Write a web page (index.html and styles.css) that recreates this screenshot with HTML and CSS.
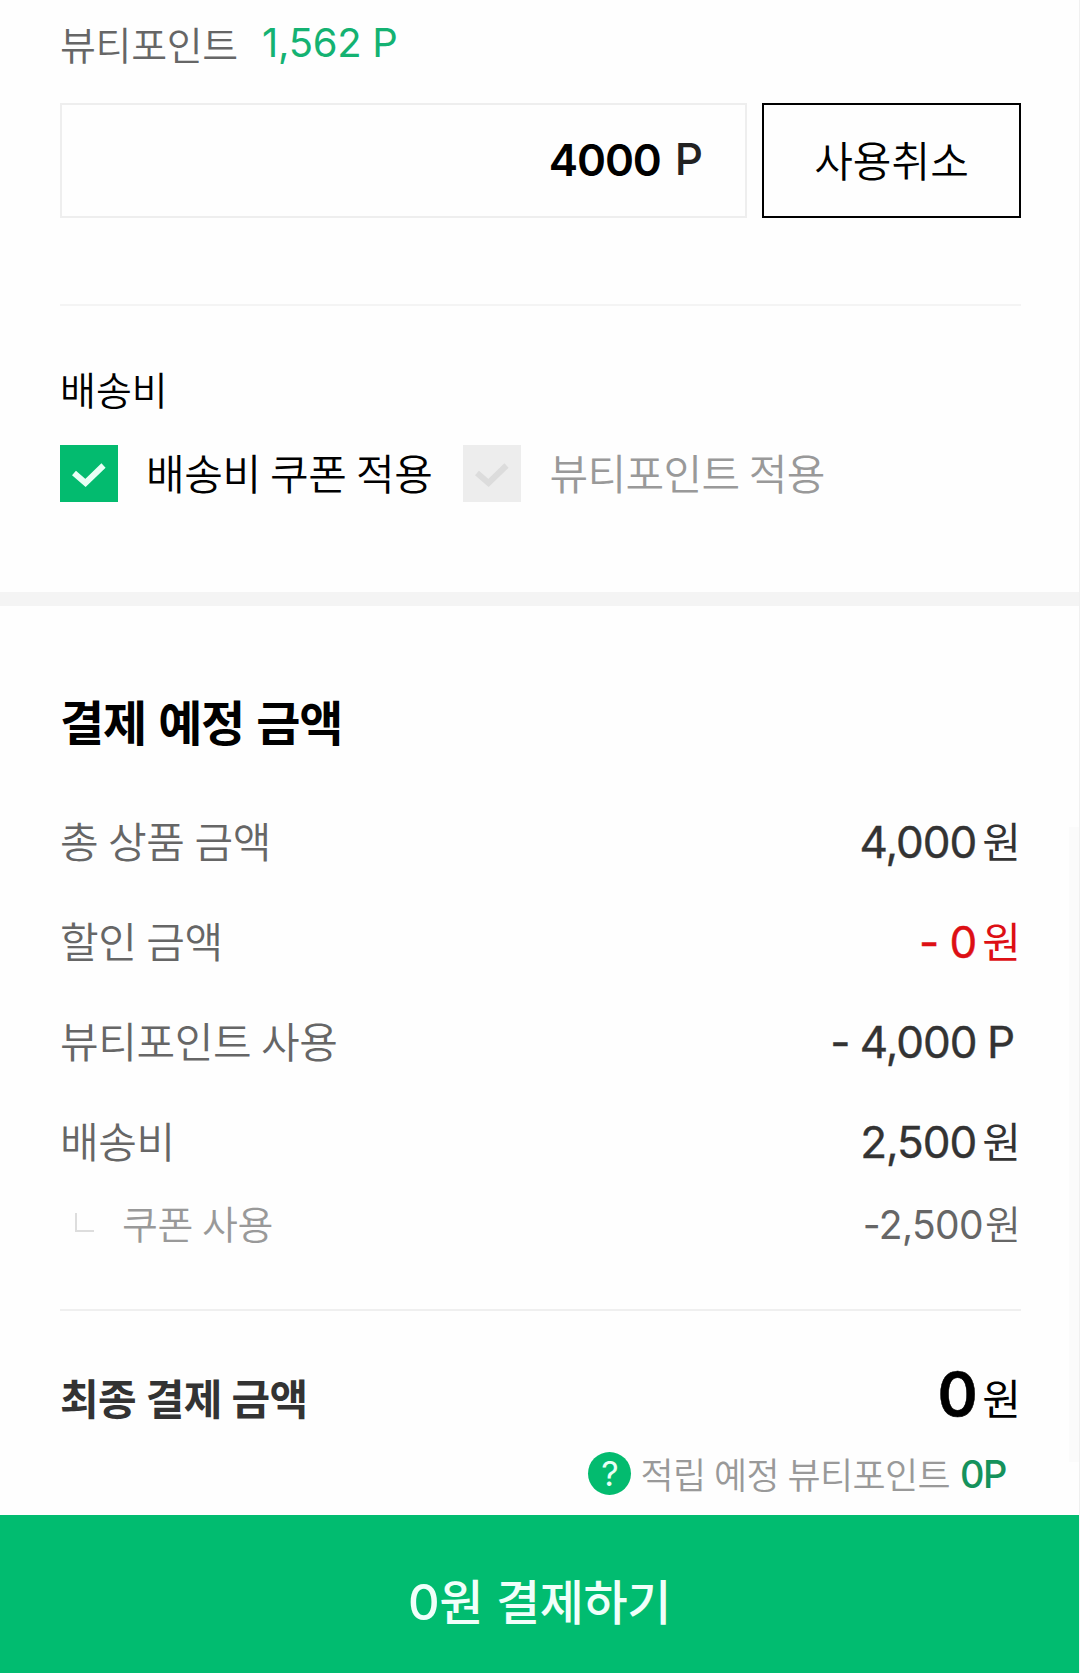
FILE: index.html
```
<!DOCTYPE html>
<html lang="ko">
<head>
    <meta charset="UTF-8">
    <meta name="viewport" content="width=device-width, initial-scale=1.0">
    <title>결제 예정 금액</title>
    <link rel="stylesheet" href="styles.css">
</head>
<body>
    <div class="page">
        <section class="points">
            <div class="point-title">
                <span class="label">뷰티포인트</span>
                <span class="balance">1,562 P</span>
            </div>
            <div class="point-form">
                <div class="point-input"><span class="value">4000</span><span class="unit">P</span></div>
                <button class="cancel-btn">사용취소</button>
            </div>
        </section>
        <section class="delivery">
            <h3>배송비</h3>
            <div class="checks">
                <div class="check on">
                    <svg class="box" viewBox="0 0 58 57"><path d="M14 28L25.5 38L43.5 20.5"/></svg>
                    <span>배송비 쿠폰 적용</span>
                </div>
                <div class="check off">
                    <svg class="box" viewBox="0 0 58 57"><path d="M14 28L25.5 38L43.5 20.5"/></svg>
                    <span>뷰티포인트 적용</span>
                </div>
            </div>
        </section>
        <section class="summary">
            <h2>결제 예정 금액</h2>
            <div class="row">
                <span class="name">총 상품 금액</span>
                <span class="price"><span class="num">4,000</span><span class="won">원</span></span>
            </div>
            <div class="row">
                <span class="name">할인 금액</span>
                <span class="price red"><span class="num">- 0</span><span class="won">원</span></span>
            </div>
            <div class="row">
                <span class="name">뷰티포인트 사용</span>
                <span class="price point"><span class="num">- 4,000 P</span></span>
            </div>
            <div class="row">
                <span class="name">배송비</span>
                <span class="price"><span class="num">2,500</span><span class="won">원</span></span>
            </div>
            <div class="row sub">
                <span class="branch"></span>
                <span class="name">쿠폰 사용</span>
                <span class="price"><span class="num">-2,500</span><span class="won">원</span></span>
            </div>
            <div class="row total">
                <span class="name">최종 결제 금액</span>
                <span class="price"><span class="num">0</span><span class="won">원</span></span>
            </div>
            <div class="reward">
                <span class="help">?</span>
                <span class="text">적립 예정 뷰티포인트</span>
                <span class="amount">0P</span>
            </div>
        </section>
        <button class="pay-btn"><span class="zero">0</span>원 결제하기</button>
        <div class="scrollbar"></div>
    </div>
</body>
</html>
```

FILE: styles.css
```
* {
    box-sizing: border-box;
}
body {
    margin: 0;
    background-color: #fefefe;
    font-family: "Noto Sans CJK KR", sans-serif;
    color: #000;
}
h2, h3 {
    margin: 0;
}
button {
    font-family: inherit;
    padding: 0;
    cursor: pointer;
}
.page {
    position: relative;
    width: 1080px;
    height: 1673px;
    overflow: hidden;
    border-right: 1px solid #f0f0f0;
    display: flex;
    flex-direction: column;
}
.points {
    height: 306px;
    margin: 0 58px 0 60px;
    border-bottom: 2px solid #f4f4f4;
}
.point-title {
    display: flex;
    height: 103px;
    line-height: 60px;
    padding-top: 13px;
}
.point-title .label {
    width: 202px;
    font-size: 39px;
    font-weight: 350;
    letter-spacing: -0.3px;
    color: #666;
}
.balance {
    font-family: Inter, sans-serif;
    font-size: 40px;
    line-height: 60px;
    letter-spacing: -0.3px;
    color: #14b272;
}
.point-form {
    display: flex;
    gap: 15px;
}
.point-input {
    width: 687px;
    height: 115px;
    border: 2px solid #eee;
    display: flex;
    justify-content: flex-end;
    gap: 14px;
    padding-right: 42px;
    font-family: Inter, sans-serif;
    font-size: 44px;
    font-weight: 600;
    line-height: 111px;
}
.point-input .value {
    letter-spacing: -1.1px;
}
.point-input .unit {
    color: #222;
    line-height: 109px;
    font-weight: 500;
}
.cancel-btn {
    width: 259px;
    height: 115px;
    padding-bottom: 4px;
    border: 2px solid #000;
    background-color: #fefefe;
    color: #000;
    font-size: 42px;
    font-weight: 350;
}
.delivery {
    height: 300px;
    padding: 58px 60px 0;
    border-bottom: 14px solid #f4f4f4;
}
.delivery h3 {
    height: 81px;
    font-size: 39px;
    font-weight: 350;
    line-height: 49px;
}
.checks {
    display: flex;
    gap: 31px;
}
.check {
    display: flex;
    gap: 28px;
    height: 57px;
    font-size: 42px;
    font-weight: 350;
    line-height: 53px;
    letter-spacing: -0.4px;
    word-spacing: -2px;
    white-space: nowrap;
}
.check .box {
    width: 58px;
    height: 57px;
    fill: none;
    stroke-width: 6;
}
.check.on .box {
    background-color: #03bb6f;
    stroke: #e8fff5;
}
.check.off .box {
    background-color: #ededed;
    stroke: #dcdcdc;
}
.check.off {
    color: #999;
    letter-spacing: -0.6px;
}
.summary {
    height: 909px;
    padding: 79px 58px 0 60px;
}
.summary h2 {
    height: 105px;
    font-size: 48px;
    font-weight: 600;
    line-height: 70px;
    letter-spacing: -1.2px;
}
.row {
    display: flex;
    align-items: baseline;
    height: 100px;
    line-height: 100px;
    font-size: 42px;
}
.row .name {
    color: #666;
    font-weight: 350;
    letter-spacing: -0.4px;
    word-spacing: -1.5px;
}
.row .price {
    margin-left: auto;
    color: #333;
}
.num {
    font-family: Inter, sans-serif;
    font-size: 44px;
    font-weight: 400;
    letter-spacing: -1px;
    -webkit-text-stroke: 0.4px currentColor;
}
.won {
    margin-left: 6px;
}
.row .price.red {
    color: #dd0f14;
}
.price.point {
    padding-right: 7px;
}
.price.point .num {
    word-spacing: -1px;
}
.row.sub {
    height: 121px;
    line-height: 65px;
    font-size: 39px;
    border-bottom: 2px solid #efefef;
}
.branch {
    align-self: flex-start;
    width: 19px;
    height: 19px;
    margin: 23px 28px 0 15px;
    border-left: 2px solid #ddd;
    border-bottom: 2px solid #ddd;
}
.sub .name {
    color: #999;
}
.sub .price {
    color: #666;
    font-weight: 350;
}
.sub .num {
    font-size: 39px;
    letter-spacing: -0.6px;
    -webkit-text-stroke: 0;
}
.sub .won {
    margin-left: 2px;
}
.row.total {
    height: 131px;
    line-height: 166px;
}
.total .name {
    color: #333;
    font-weight: 600;
    letter-spacing: -0.6px;
}
.total .price {
    color: #000;
}
.total .num {
    font-size: 61px;
    font-weight: 600;
    letter-spacing: -1.5px;
    vertical-align: -1px;
    -webkit-text-stroke: 0.5px currentColor;
}
.reward {
    display: flex;
    justify-content: flex-end;
    align-items: center;
    height: 62px;
    padding-right: 15px;
    font-size: 36px;
    font-weight: 350;
    color: #999;
}
.reward .text {
    letter-spacing: -0.6px;
    word-spacing: -1px;
}
.help {
    width: 43px;
    height: 43px;
    margin-right: 9px;
    border-radius: 50%;
    background-color: #03bb6f;
    color: #e8fff5;
    font-family: Inter, sans-serif;
    font-size: 34px;
    font-weight: 400;
    line-height: 44px;
    text-align: center;
}
.amount {
    margin-left: 10px;
    font-family: Inter, sans-serif;
    font-size: 38px;
    font-weight: 500;
    line-height: 44px;
    padding-top: 2px;
    letter-spacing: -1.5px;
    color: #15925c;
}
.pay-btn {
    height: 158px;
    padding-top: 9px;
    border: 0;
    background-color: #01bc70;
    color: #f0fffa;
    font-size: 48px;
    font-weight: 500;
    letter-spacing: -0.4px;
}
.pay-btn .zero {
    font-family: Inter, sans-serif;
    font-size: 49px;
}
.scrollbar {
    position: absolute;
    top: 827px;
    right: 0;
    width: 10px;
    height: 635px;
    background-color: #fbfbfb;
}
```
